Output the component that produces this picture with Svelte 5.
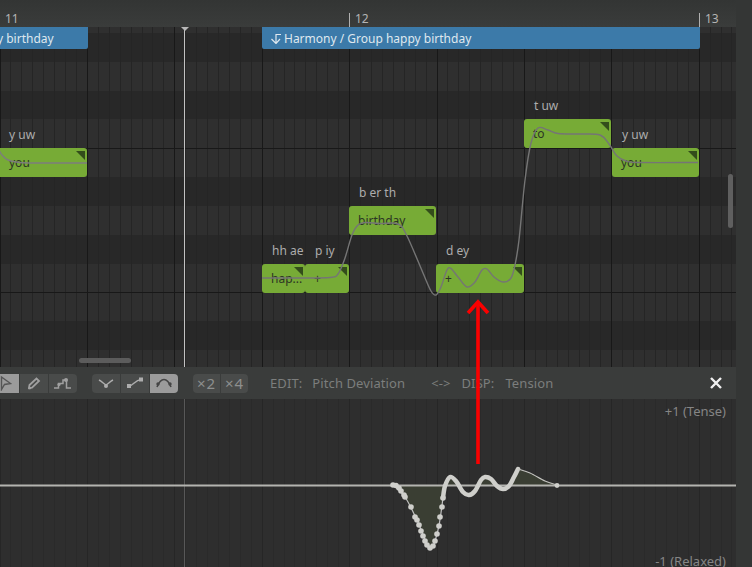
<script>
  const beat = 87.4;
  const snap = (v) => Math.round(v - 0.5) + 0.5;
  const vlines = [];
  for (let i = 0; i * beat / 8 < 740; i++) {
    vlines.push({ x: snap((i * beat) / 8), major: i % 8 === 0 });
  }
  const bands = [
    { y: 27, h: 6, dark: false },
    { y: 33, h: 29, dark: true },
    { y: 62, h: 29, dark: false },
    { y: 91, h: 28, dark: true },
    { y: 119, h: 58, dark: false },
    { y: 177, h: 29, dark: true },
    { y: 206, h: 29, dark: false },
    { y: 235, h: 29, dark: true },
    { y: 264, h: 57, dark: false },
    { y: 321, h: 29, dark: true },
    { y: 350, h: 17, dark: false }
  ];
  const notes = [
    { x: -20, w: 107, y: 148, text: 'you', ph: 'y uw' },
    { x: 262, w: 43, y: 264, text: 'hap...', ph: 'hh ae' },
    { x: 305, w: 44, y: 264, text: '+', ph: 'p iy' },
    { x: 349, w: 87, y: 206, text: 'birthday', ph: 'b er th' },
    { x: 436, w: 88, y: 264, text: '+', ph: 'd ey' },
    { x: 524, w: 87, y: 119, text: 'to', ph: 't uw' },
    { x: 612, w: 87, y: 148, text: 'you', ph: 'y uw' }
  ];
  function spline(pts) {
    let d = `M${pts[0][0]} ${pts[0][1]}`;
    for (let i = 0; i < pts.length - 1; i++) {
      const p0 = pts[Math.max(i - 1, 0)];
      const p1 = pts[i];
      const p2 = pts[i + 1];
      const p3 = pts[Math.min(i + 2, pts.length - 1)];
      const c1x = p1[0] + (p2[0] - p0[0]) / 6;
      const c1y = p1[1] + (p2[1] - p0[1]) / 6;
      const c2x = p2[0] - (p3[0] - p1[0]) / 6;
      const c2y = p2[1] - (p3[1] - p1[1]) / 6;
      d += ` C${c1x.toFixed(1)} ${c1y.toFixed(1)} ${c2x.toFixed(1)} ${c2y.toFixed(1)} ${p2[0]} ${p2[1]}`;
    }
    return d;
  }
  const pitchLeft = spline([[-2, 148], [2, 155], [8, 160], [20, 162.5], [40, 163], [87, 163]]);
  const pitchMain = spline([
    [262, 278], [300, 278], [330, 277.5], [338, 274], [345, 258], [352, 235], [358, 225], [366, 222.5],
    [380, 223.5], [398, 224], [407, 236], [423, 273], [431, 291], [436, 295], [441, 287], [447, 270],
    [451, 268.5], [458, 277], [467, 287], [475, 282], [482, 270], [487, 269], [494, 277], [503, 282],
    [511, 278], [515, 265], [519, 240], [525, 180], [531, 143], [538, 128], [548, 130], [558, 133.5],
    [580, 134], [600, 135], [609, 144], [617, 156], [626, 161], [639, 162.5], [698, 162.5]
  ]);
  const tenseDots = [
    [393, 485], [396, 485.5], [399, 488], [401, 491], [404, 495], [405, 497],
    [411, 507], [415, 517], [417, 520], [419, 525], [421, 531], [423, 536], [425, 541], [427, 545],
    [430, 548], [433, 546], [435, 541], [437, 534], [439, 526], [440, 517], [442, 507], [443, 498]
  ];
  const dense = spline([
    [443, 498], [445, 486], [450, 477], [456, 481], [463, 492], [469, 495], [475, 491], [481, 480],
    [485, 477], [491, 479], [497, 486], [503, 489], [509, 486], [514, 477], [518, 469]
  ]);
  const thin = spline([
    [393, 485], [405, 497], [417, 520], [430, 548], [438, 530], [443, 498]
  ]);
  const tail = spline([[518, 469], [530, 473], [545, 481], [557, 485]]);
  const area = `M393 485 L399 488 L405 497 L417 520 L430 548 L438 530 L443 498 L447 485 L450 477 L456 481 L460 485 L463 485 L478 485 L481 480 L485 477 L491 479 L496 485 L510 485 L514 477 L518 469 L530 473 L545 481 L557 485 Z`;
</script>

<div class="app">
  <div class="main">
    <header class="ruler">
      <span class="bar first">11</span>
      <span class="bar tick">12</span>
      <span class="bar tick last">13</span>
    </header>

    <section class="roll">
      {#each bands as b}
        <div class="band" class:dark={b.dark} style="top:{b.y - 27}px;height:{b.h}px"></div>
      {/each}
      <svg class="layer" width="736" height="340" viewBox="0 27 736 340">
        {#each vlines as l}
          <line x1={l.x} x2={l.x} y1="27" y2="367" stroke={l.major ? '#181818' : '#252525'} />
        {/each}
        <line x1="0" x2="736" y1="148.5" y2="148.5" stroke="#181818" />
        <line x1="0" x2="736" y1="292.5" y2="292.5" stroke="#181818" />
      </svg>

      <div class="playhead"></div>
      <div class="playhead-cap"></div>

      <div class="region" style="left:-20px;width:108px">
        <span class="region-text clipped">y birthday</span>
      </div>
      <div class="region" style="left:262px;width:438px">
        <svg class="region-icon" width="12" height="12" viewBox="0 0 12 12" fill="none" stroke="#dfe8ef" stroke-width="1.2">
          <path d="M11 2.5H6V11M1.5 7L6 11.5L10 7" />
        </svg>
        <span class="region-text">Harmony / Group happy birthday</span>
      </div>

      {#each notes as n}
        <div class="phoneme" style="left:{n.x + 10 + (n.x < 0 ? 19 : 0)}px;top:{n.y - 27 - 21}px">{n.ph}</div>
        <div class="note" style="left:{n.x}px;top:{n.y - 27}px;width:{n.w}px">
          <span class="note-text" style="margin-left:{n.x < 0 ? 29 : 9}px">{n.text}</span>
        </div>
      {/each}

      <svg class="layer" width="736" height="340" viewBox="0 27 736 340" fill="none">
        <path d={pitchLeft} stroke="#7d7d7d" stroke-width="1.4" />
        <path d={pitchMain} stroke="#757575" stroke-width="1.4" />
      </svg>

      <div class="hscroll"></div>
      <div class="vscroll"></div>
    </section>

    <div class="toolbar">
      <div class="group">
        <button class="tool on">
          <svg width="16" height="16" viewBox="0 0 16 16" fill="none" stroke="#555555" stroke-width="1.4">
            <path d="M4.5 2L13.5 8.5L7.5 9.5L4.5 14.5Z" />
          </svg>
        </button>
        <button class="tool">
          <svg width="16" height="16" viewBox="0 0 16 16" fill="none" stroke="#a0a0a0" stroke-width="1.8">
            <path d="M3 13L3.5 10L10.5 3.5L13 6L6 12.6Z" />
            <path d="M2.5 13.5L5 13" />
          </svg>
        </button>
        <button class="tool">
          <svg width="20" height="16" viewBox="0 0 20 16" fill="none" stroke="#a0a0a0" stroke-width="1.5">
            <path d="M1 13H5.5V8.5H10V5H13.5V13H18" />
            <circle cx="6" cy="9.5" r="1.6" fill="#a0a0a0" stroke="none" />
            <circle cx="13" cy="5" r="2" fill="#a0a0a0" stroke="none" />
          </svg>
        </button>
      </div>

      <div class="group">
        <button class="tool">
          <svg width="18" height="14" viewBox="0 0 18 14" fill="none" stroke="#adadad" stroke-width="1.5">
            <path d="M2 4C5 5.5 7 8 9 9C11 8 13 5.5 16 4" />
            <circle cx="9" cy="10" r="2" fill="#adadad" stroke="none" />
          </svg>
        </button>
        <button class="tool">
          <svg width="18" height="14" viewBox="0 0 18 14" fill="none" stroke="#adadad" stroke-width="1.5">
            <path d="M3 10C7 10 9 4 15 3.5" />
            <rect x="1" y="8" width="4" height="4" fill="#adadad" stroke="none" />
            <rect x="13" y="1.5" width="4" height="4" fill="#adadad" stroke="none" />
          </svg>
        </button>
        <button class="tool on">
          <svg width="18" height="14" viewBox="0 0 18 14" fill="none" stroke="#454545" stroke-width="1.6">
            <path d="M2 11C4 6 6 3.5 9 3.5C12 3.5 14 6 16 11" />
            <circle cx="3" cy="8" r="1.7" fill="#454545" stroke="none" />
            <circle cx="15" cy="8" r="1.7" fill="#454545" stroke="none" />
          </svg>
        </button>
      </div>

      <div class="group">
        <button class="tool times">×2</button>
        <button class="tool times">×4</button>
      </div>

      <span class="label edit">EDIT:</span>
      <span class="label param">Pitch Deviation</span>
      <span class="label swap">&lt;-&gt;</span>
      <span class="label disp">DISP:</span>
      <span class="label param2">Tension</span>

      <svg class="close" width="12" height="12" viewBox="0 0 12 12" stroke="#f0f0f0" stroke-width="2.4">
        <path d="M1 1L11 11M11 1L1 11" />
      </svg>
    </div>

    <section class="param-panel">
      <svg class="layer" width="736" height="168" viewBox="0 399 736 168" fill="none">
        {#each vlines as l}
          <line x1={l.x} x2={l.x} y1="399" y2="567" stroke={l.major ? '#262626' : '#2a2a2a'} />
        {/each}
        <line x1="184.5" x2="184.5" y1="399" y2="567" stroke="#585858" />
        <path d={area} fill="#3a3e33" />
        <line x1="0" x2="736" y1="485.5" y2="485.5" stroke="#b4b4b0" stroke-width="2" />
        <path d={thin} stroke="#c0c0c0" stroke-width="1.2" />
        {#each tenseDots as d}
          <circle cx={d[0]} cy={d[1]} r="2.8" fill="#cfcfcb" />
        {/each}
        <path d={dense} stroke="#cfcfcb" stroke-width="4.5" stroke-linecap="round" />
        <path d={tail} stroke="#c4c4c0" stroke-width="1.2" />
        <circle cx="557" cy="485.5" r="2.4" fill="#cfcfcb" />
      </svg>
      <span class="axis top">+1 (Tense)</span>
      <span class="axis bottom">-1 (Relaxed)</span>
    </section>
  </div>
  <aside class="strip"></aside>

  <svg class="arrow" width="30" height="170" viewBox="0 0 30 170" fill="none" stroke="#fb0000" stroke-width="3.6">
    <path d="M15 5V167" />
    <path d="M5 16L15 5L25 16" />
  </svg>
</div>

<style>
  :global(body) {
    margin: 0;
    background: #2e2e2e;
  }
  .app {
    position: relative;
    display: flex;
    width: 752px;
    height: 567px;
    overflow: hidden;
    font-family: "Noto Sans", "Open Sans", sans-serif;
    font-size: 12px;
  }
  .main {
    width: 736px;
    display: flex;
    flex-direction: column;
  }
  .strip {
    flex: 1;
    background: #343635;
  }
  .ruler {
    height: 27px;
    flex: none;
    display: flex;
    align-items: flex-end;
    background: linear-gradient(#333534, #3a3c3b);
    color: #b4b4b4;
    font-size: 12px;
  }
  .bar {
    height: 14px;
    line-height: 12px;
    box-sizing: border-box;
  }
  .first {
    width: 349px;
    padding-left: 5px;
  }
  .tick {
    border-left: 1px solid #b0b0b0;
    padding-left: 5px;
    width: 350px;
    box-sizing: border-box;
  }
  .last {
    width: 37px;
  }
  .roll {
    position: relative;
    height: 340px;
    flex: none;
    overflow: hidden;
    background: #2f2f2f;
  }
  .band {
    position: absolute;
    left: 0;
    right: 0;
    background: #2f2f2f;
  }
  .band.dark {
    background: #282828;
  }
  .layer {
    position: absolute;
    left: 0;
    top: 0;
    display: block;
  }
  .playhead {
    position: absolute;
    left: 184px;
    top: 0;
    bottom: 0;
    width: 1px;
    background: #c2c2c2;
  }
  .playhead-cap {
    position: absolute;
    left: 181px;
    top: 0;
    width: 8px;
    height: 4px;
    background: #b8b8b8;
    clip-path: polygon(0 0, 100% 0, 50% 100%);
  }
  .region {
    position: absolute;
    top: 0;
    height: 22px;
    display: flex;
    align-items: center;
    background: #3c7aa9;
    border-radius: 0 0 2px 2px;
    color: #dfe8ef;
    font-size: 12px;
  }
  .region-icon {
    margin-left: 8px;
    margin-right: 2px;
  }
  .region-text.clipped {
    margin-left: 17px;
  }
  .phoneme {
    position: absolute;
    color: #adadad;
    font-size: 12px;
    line-height: 16px;
    white-space: nowrap;
  }
  .note {
    position: absolute;
    height: 29px;
    box-sizing: border-box;
    background: #77ab36;
    border-radius: 3px;
    color: #2c3524;
    font-size: 12px;
    line-height: 30px;
    white-space: nowrap;
    overflow: hidden;
  }
  .note::after {
    content: "";
    position: absolute;
    top: 3px;
    right: 2px;
    width: 9px;
    height: 9px;
    background: #334d1b;
    clip-path: polygon(0 0, 100% 0, 100% 100%);
  }
  .note-text {
    display: inline-block;
  }
  .hscroll {
    position: absolute;
    left: 79px;
    top: 331px;
    width: 52px;
    height: 5px;
    border-radius: 3px;
    background: #5c5c5c;
  }
  .vscroll {
    position: absolute;
    left: 728px;
    top: 147px;
    width: 5px;
    height: 54px;
    border-radius: 3px;
    background: #5f5f5f;
  }
  .toolbar {
    height: 32px;
    flex: none;
    display: flex;
    align-items: center;
    margin-left: -9px;
    background: #3a3c3b;
    color: #7c7e7d;
    font-size: 13px;
    letter-spacing: 0.1px;
  }
  .group {
    display: flex;
    gap: 1px;
    height: 19px;
    margin-right: 15px;
    border-radius: 4px;
    overflow: hidden;
  }
  .tool {
    width: 28px;
    height: 19px;
    padding: 0;
    border: 0;
    background: #494b4a;
    display: flex;
    align-items: center;
    justify-content: center;
    font: inherit;
    color: #8d8f8e;
  }
  .tool.on {
    background: #9b9b9b;
  }
  .tool.times {
    width: 27px;
    font-size: 15px;
    letter-spacing: 1px;
  }
  .label {
    white-space: nowrap;
  }
  .edit {
    margin-left: 7px;
  }
  .param {
    margin-left: 10px;
  }
  .swap {
    margin-left: 26px;
  }
  .disp {
    margin-left: 11px;
  }
  .param2 {
    margin-left: 11px;
  }
  .close {
    margin-left: auto;
    margin-right: 14px;
  }
  .param-panel {
    position: relative;
    flex: 1;
    overflow: hidden;
    background: #2e2e2e;
  }
  .axis {
    position: absolute;
    right: 10px;
    color: #858585;
    font-size: 13px;
    line-height: 16px;
  }
  .axis.top {
    top: 4px;
  }
  .axis.bottom {
    top: 154px;
  }
  .arrow {
    position: absolute;
    left: 463px;
    top: 297px;
  }
</style>
